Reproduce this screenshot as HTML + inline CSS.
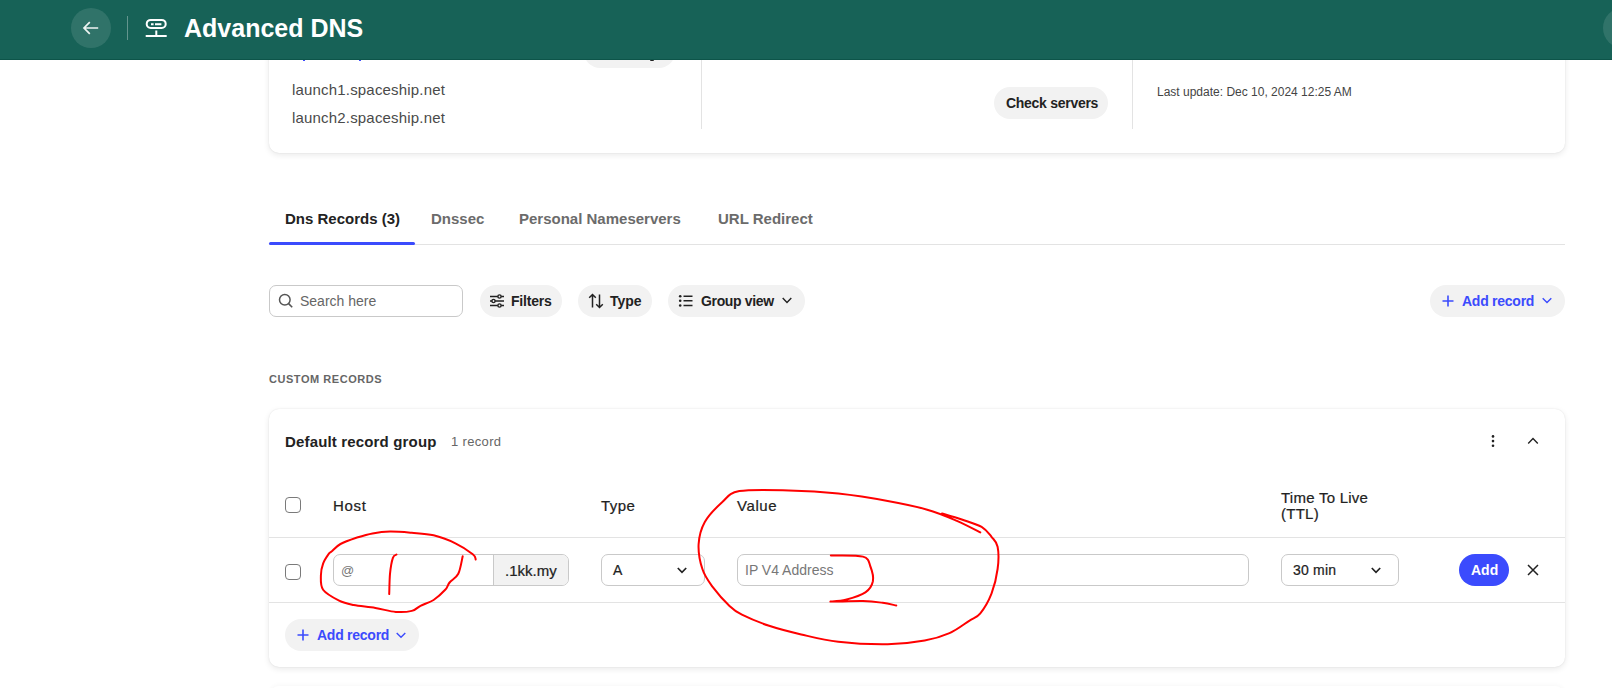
<!DOCTYPE html>
<html><head><meta charset="utf-8">
<style>
*{box-sizing:border-box;margin:0;padding:0}
html,body{width:1612px;height:688px;overflow:hidden;background:#fff;font-family:"Liberation Sans",sans-serif;color:#222}
.abs{position:absolute}
#hdr{position:absolute;left:0;top:0;width:1612px;height:60px;background:#176257;border-bottom:1px solid #0d5449;z-index:10}
.card{position:absolute;background:#fff;border-radius:10px;box-shadow:0 2px 6px rgba(0,0,0,.09),0 0 1.5px rgba(0,0,0,.10)}
.pill{position:absolute;background:#f2f2f2;border-radius:16px;height:32px}
.t{position:absolute;white-space:nowrap;line-height:1}
.b{font-weight:bold}
.m{-webkit-text-stroke:0.22px currentColor}
.vline{position:absolute;width:1px;background:#e3e3e3}
.hline{position:absolute;height:1px;background:#e3e3e3}
.inp{position:absolute;border:1px solid #c9c9c9;border-radius:7px;background:#fff}
.cb{position:absolute;width:16px;height:16px;border:1.3px solid #7a7a7a;border-radius:4px;background:#fff}
svg{position:absolute;overflow:visible}
</style></head><body>

<!-- top card -->
<div class="card" style="left:269px;top:-40px;width:1296px;height:193px"></div>
<div class="pill" style="left:584px;top:36px;width:91px;height:32px"></div>
<div class="abs" style="left:650px;top:59px;width:4px;height:2px;border-radius:1px;background:#222"></div>
<div class="abs" style="left:303px;top:59px;width:2px;height:2px;background:#3b4bfd"></div>
<div class="abs" style="left:359px;top:59px;width:2px;height:2px;background:#3b4bfd"></div>
<div class="abs" style="left:269px;top:686px;width:1296px;height:100px;border-radius:10px;background:#fff;box-shadow:0 -1px 5px rgba(0,0,0,.035)"></div>
<div class="t" style="left:292px;top:82px;font-size:15px;color:#4a4a4a;letter-spacing:0.18px">launch1.spaceship.net</div>
<div class="t" style="left:292px;top:110px;font-size:15px;color:#4a4a4a;letter-spacing:0.18px">launch2.spaceship.net</div>
<div class="vline" style="left:701px;top:60px;height:69px"></div>
<div class="vline" style="left:1132px;top:60px;height:69px"></div>
<div class="pill" style="left:994px;top:87px;width:114px"></div>
<div class="t b" style="left:1006px;top:96px;font-size:14px;color:#222;letter-spacing:-0.28px">Check servers</div>
<div class="t" style="left:1157px;top:86px;font-size:12px;color:#444">Last update: Dec 10, 2024 12:25 AM</div>

<!-- header -->
<div id="hdr">
  <div class="abs" style="left:71px;top:8px;width:40px;height:40px;border-radius:50%;background:rgba(255,255,255,.11)"></div>
  <svg style="left:83px;top:21px" width="16" height="14" viewBox="0 0 16 14"><path d="M15.2 7H1.2M6.8 1.2L1 7l5.8 5.8" fill="none" stroke="#eef4f2" stroke-width="1.7"/></svg>
  <div class="abs" style="left:127px;top:16px;width:1px;height:24px;background:rgba(255,255,255,.33)"></div>
  <svg style="left:145px;top:18px" width="22" height="20" viewBox="0 0 22 20"><rect x="1.7" y="1.9" width="19" height="8" rx="4" fill="none" stroke="#fff" stroke-width="2"/><path d="M6 6.2h2.6M10 6.2h6.4" stroke="#fff" stroke-width="2"/><path d="M11.3 12.5v5M0.7 18h21" stroke="#fff" stroke-width="2"/></svg>
  <div class="t b" style="left:184px;top:16px;font-size:25px;color:#fff">Advanced DNS</div>
  <div class="abs" style="left:1603px;top:8px;width:40px;height:40px;border-radius:50%;background:rgba(255,255,255,.11)"></div>
</div>

<!-- tabs -->
<div class="t b" style="left:285px;top:211px;font-size:15px;color:#222">Dns Records (3)</div>
<div class="t b" style="left:431px;top:211px;font-size:15px;color:#6b6b6b">Dnssec</div>
<div class="t b" style="left:519px;top:211px;font-size:15px;color:#6b6b6b">Personal Nameservers</div>
<div class="t b" style="left:718px;top:211px;font-size:15px;color:#6b6b6b">URL Redirect</div>
<div class="hline" style="left:269px;top:244px;width:1296px"></div>
<div class="abs" style="left:269px;top:242px;width:146px;height:3px;background:#3b4bfd;border-radius:2px"></div>

<!-- toolbar -->
<div class="inp" style="left:269px;top:285px;width:194px;height:32px"></div>
<svg style="left:278px;top:293px" width="16" height="16" viewBox="0 0 16 16"><circle cx="6.8" cy="6.8" r="5.3" fill="none" stroke="#555" stroke-width="1.5"/><path d="M10.6 10.6l3.6 3.6" stroke="#555" stroke-width="1.6"/></svg>
<div class="t" style="left:300px;top:294px;font-size:14px;color:#666">Search here</div>

<div class="pill" style="left:480px;top:285px;width:82px"></div>
<svg style="left:489px;top:293px" width="16" height="16" viewBox="0 0 16 16"><g stroke="#222" stroke-width="1.4" fill="#f2f2f2"><path d="M1 3.5h14M1 8h14M1 12.5h14"/><circle cx="10.5" cy="3.5" r="1.6"/><circle cx="4.5" cy="8" r="1.6"/><circle cx="10.5" cy="12.5" r="1.6"/></g></svg>
<div class="t b" style="left:511px;top:294px;font-size:14px;color:#222;letter-spacing:-0.2px">Filters</div>

<div class="pill" style="left:578px;top:285px;width:74px"></div>
<svg style="left:588px;top:293px" width="16" height="16" viewBox="0 0 16 16"><g stroke="#222" stroke-width="1.5" fill="none"><path d="M4.5 14.5V1.5M1.2 4.8L4.5 1.5l3.3 3.3"/><path d="M11.5 1.5v13M8.2 11.2l3.3 3.3 3.3-3.3"/></g></svg>
<div class="t b" style="left:610px;top:294px;font-size:14px;color:#222">Type</div>

<div class="pill" style="left:668px;top:285px;width:137px"></div>
<svg style="left:678px;top:293px" width="16" height="16" viewBox="0 0 16 16"><g fill="#222"><circle cx="2.2" cy="3.2" r="1.3"/><circle cx="2.2" cy="7.8" r="1.3"/><circle cx="2.2" cy="12.5" r="1.3"/></g><path d="M5.5 3.2h9M5.5 7.8h9M5.5 12.5h9" stroke="#222" stroke-width="1.4"/></svg>
<div class="t b" style="left:701px;top:294px;font-size:14px;color:#222;letter-spacing:-0.35px">Group view</div>
<svg style="left:782px;top:297px" width="10" height="7" viewBox="0 0 10 7"><path d="M0.7 1l4.3 4.5L9.3 1" fill="none" stroke="#222" stroke-width="1.4"/></svg>

<div class="pill" style="left:1430px;top:285px;width:135px"></div>
<svg style="left:1442px;top:295px" width="12" height="12" viewBox="0 0 12 12"><path d="M6 0.5v11M0.5 6h11" stroke="#3b4bfd" stroke-width="1.6"/></svg>
<div class="t b" style="left:1462px;top:294px;font-size:14px;color:#3b4bfd;letter-spacing:-0.25px">Add record</div>
<svg style="left:1542px;top:297px" width="10" height="7" viewBox="0 0 10 7"><path d="M0.7 1.3l4.3 4.3L9.3 1.3" fill="none" stroke="#3b4bfd" stroke-width="1.4"/></svg>

<div class="t b" style="left:269px;top:374px;font-size:11px;color:#666;letter-spacing:0.55px">CUSTOM RECORDS</div>

<!-- records card -->
<div class="card" style="left:269px;top:409px;width:1296px;height:258px"></div>
<div class="t b" style="left:285px;top:434px;font-size:15px;color:#222;letter-spacing:0.16px">Default record group</div>
<div class="t" style="left:451px;top:435px;font-size:13px;color:#666;letter-spacing:0.34px">1 record</div>
<svg style="left:1490px;top:434px" width="6" height="14" viewBox="0 0 6 14"><g fill="#222"><circle cx="3" cy="2.4" r="1.3"/><circle cx="3" cy="7.1" r="1.3"/><circle cx="3" cy="11.8" r="1.3"/></g></svg>
<svg style="left:1527px;top:437px" width="12" height="8" viewBox="0 0 12 8"><path d="M1.2 6.4l4.8-4.8 4.8 4.8" fill="none" stroke="#222" stroke-width="1.4"/></svg>

<div class="cb" style="left:285px;top:497px"></div>
<div class="t m" style="left:333px;top:498px;font-size:15px;color:#222;letter-spacing:0.7px">Host</div>
<div class="t m" style="left:601px;top:498px;font-size:15px;color:#222;letter-spacing:0.4px">Type</div>
<div class="t m" style="left:737px;top:498px;font-size:15px;color:#222;letter-spacing:0.6px">Value</div>
<div class="t m" style="left:1281px;top:490px;font-size:15px;color:#222;line-height:16px;letter-spacing:0.25px">Time To Live<br>(TTL)</div>
<div class="hline" style="left:269px;top:537px;width:1296px"></div>

<div class="cb" style="left:285px;top:564px"></div>
<div class="inp" style="left:333px;top:554px;width:236px;height:32px;overflow:hidden">
  <div class="abs" style="left:159px;top:0;width:77px;height:32px;background:#f2f2f2;border-left:1px solid #c9c9c9"></div>
</div>
<div class="t" style="left:341px;top:564px;font-size:13px;color:#777">@</div>
<div class="t m" style="left:505px;top:563px;font-size:15px;color:#222">.1kk.my</div>
<div class="inp" style="left:601px;top:554px;width:104px;height:32px"></div>
<div class="t m" style="left:613px;top:563px;font-size:14px;color:#222">A</div>
<svg style="left:677px;top:567px" width="10" height="7" viewBox="0 0 10 7"><path d="M0.8 1l4.2 4.3L9.2 1" fill="none" stroke="#222" stroke-width="1.7"/></svg>
<div class="inp" style="left:737px;top:554px;width:512px;height:32px"></div>
<div class="t" style="left:745px;top:563px;font-size:14px;color:#777">IP V4 Address</div>
<div class="inp" style="left:1281px;top:554px;width:118px;height:32px"></div>
<div class="t m" style="left:1293px;top:563px;font-size:14px;color:#222;letter-spacing:0.2px">30 min</div>
<svg style="left:1371px;top:567px" width="10" height="7" viewBox="0 0 10 7"><path d="M0.8 1l4.2 4.3L9.2 1" fill="none" stroke="#222" stroke-width="1.7"/></svg>
<div class="abs" style="left:1459px;top:554px;width:50px;height:32px;border-radius:16px;background:#3b4bfd"></div>
<div class="t b" style="left:1471px;top:563px;font-size:14px;color:#fff">Add</div>
<svg style="left:1527px;top:564px" width="12" height="12" viewBox="0 0 12 12"><path d="M1 1l10 10M11 1L1 11" stroke="#222" stroke-width="1.5"/></svg>
<div class="hline" style="left:269px;top:602px;width:1296px"></div>

<div class="pill" style="left:285px;top:619px;width:134px"></div>
<svg style="left:297px;top:629px" width="12" height="12" viewBox="0 0 12 12"><path d="M6 0.5v11M0.5 6h11" stroke="#3b4bfd" stroke-width="1.6"/></svg>
<div class="t b" style="left:317px;top:628px;font-size:14px;color:#3b4bfd;letter-spacing:-0.25px">Add record</div>
<svg style="left:396px;top:632px" width="10" height="7" viewBox="0 0 10 7"><path d="M0.7 1l4.3 4.3L9.3 1" fill="none" stroke="#3b4bfd" stroke-width="1.4"/></svg>

<!-- red annotations -->
<svg style="left:0;top:0" width="1612" height="688" viewBox="0 0 1612 688">
<g fill="none" stroke="#f00" stroke-width="2.0" stroke-linecap="round" stroke-linejoin="round">
<path d="M475.7 559.5 C475.3 558.6 476.2 556.9 472.8 554.2 C469.4 551.5 461.9 546.4 455.4 543.3 C448.8 540.1 440.9 537.0 433.6 535.3 C426.3 533.5 419.0 533.4 411.8 532.8 C404.5 532.2 396.5 531.5 390.0 531.6 C383.4 531.7 378.1 532.4 372.5 533.4 C366.9 534.4 361.9 536.0 356.5 537.7 C351.2 539.5 344.7 541.7 340.5 544.0 C336.4 546.2 333.7 549.6 331.8 551.3 C329.9 552.9 330.4 551.7 328.9 553.7 C327.4 555.8 324.4 560.0 323.1 563.6 C321.8 567.2 320.9 570.9 320.9 575.2 C320.9 579.6 320.1 585.5 323.1 589.8 C326.1 594.0 334.0 598.1 339.1 600.7 C344.2 603.2 347.6 603.8 353.6 605.1 C359.7 606.3 368.4 606.8 375.4 608.0 C382.5 609.1 389.7 611.4 395.8 611.9 C401.8 612.4 407.7 611.9 411.8 610.9 C415.9 609.9 416.9 607.6 420.5 605.8 C424.1 604.0 429.5 602.6 433.6 600.0 C437.7 597.3 442.5 592.7 445.2 589.8 C447.9 586.9 447.4 585.2 449.6 582.5 C451.8 579.9 456.1 578.2 458.3 573.8 C460.5 569.4 461.9 559.3 462.7 556.3"/>
<path d="M396.5 554.6 C395.9 555.1 394.0 554.6 392.9 557.8 C391.8 561.0 390.6 567.7 390.0 573.8 C389.4 579.9 389.4 590.8 389.2 594.1"/>
<path d="M980.3 532.4 C976.4 530.4 965.7 524.6 956.9 520.8 C948.0 517.0 938.7 512.9 927.2 509.7 C915.7 506.4 902.5 503.7 887.7 501.0 C872.9 498.3 854.7 495.4 838.3 493.6 C821.8 491.8 805.3 490.8 788.8 490.4 C772.4 490.0 750.5 489.1 739.4 491.1 C728.3 493.1 727.9 497.1 722.1 502.2 C716.4 507.4 708.7 515.0 704.8 522.0 C700.9 529.0 699.1 536.4 698.6 544.2 C698.2 552.1 700.1 562.0 702.4 569.0 C704.6 576.0 707.7 580.1 712.2 586.3 C716.8 592.4 724.6 601.3 729.5 606.0 C734.5 610.8 735.3 611.4 741.9 614.7 C748.5 618.0 759.2 622.5 769.1 625.8 C779.0 629.1 789.7 631.8 801.2 634.4 C812.7 637.1 823.8 640.2 838.3 641.8 C852.7 643.5 873.3 644.5 887.7 644.3 C902.1 644.1 914.4 642.5 924.7 640.6 C935.0 638.8 942.0 636.5 949.5 633.2 C956.9 629.9 964.1 624.1 969.2 620.8 C974.4 617.6 976.6 618.0 980.3 613.4 C984.0 608.9 988.6 601.1 991.5 593.7 C994.3 586.3 996.6 576.8 997.6 569.0 C998.7 561.1 998.7 552.1 997.6 546.7 C996.6 541.4 994.1 540.1 991.5 536.8 C988.8 533.5 986.5 529.8 981.6 526.9 C976.6 524.1 968.4 521.8 961.8 519.5 C955.2 517.3 945.3 514.4 942.0 513.4"/>
<path d="M830.8 555.4 C836.2 555.6 856.4 554.7 863.0 556.6 C869.6 558.5 868.7 562.4 870.4 566.5 C872.0 570.6 873.7 577.0 872.9 581.3 C872.0 585.6 870.0 589.3 865.4 592.4 C860.9 595.5 851.4 598.3 845.7 599.8 C839.9 601.4 828.0 601.4 830.8 601.6 C833.7 601.8 854.3 600.9 863.0 601.1 C871.6 601.3 877.2 602.1 882.7 602.8 C888.3 603.5 894.1 605.1 896.3 605.5"/>
</g>
</svg>

</body></html>
